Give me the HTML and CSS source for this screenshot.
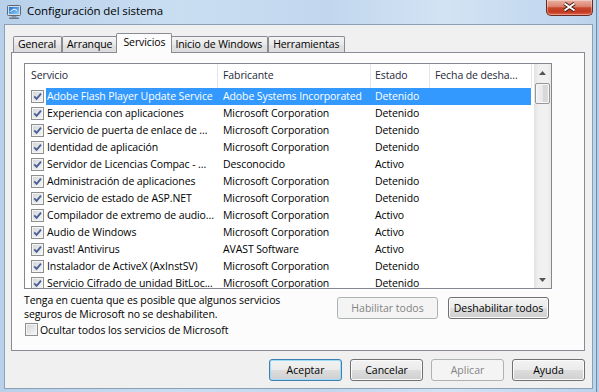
FILE: index.html
```html
<!DOCTYPE html>
<html lang="es">
<head>
    <meta charset="UTF-8">
    <title>Configuración del sistema</title>
    <link rel="stylesheet" href="styles.css">
</head>
<body>
    <svg class="defs" width="0" height="0">
        <symbol id="tick" viewBox="0 0 11 11">
            <path d="M2.2 5.4 4.6 7.9 9 2.6" fill="none" stroke="#4a5f97" stroke-width="1.8"/>
        </symbol>
    </svg>

    <div class="window">
        <div class="titlebar">
            <svg class="app-icon" width="16" height="16" viewBox="0 0 16 16">
                <defs>
                    <linearGradient id="scr" x1="0" y1="0" x2="1" y2="1">
                        <stop offset="0" stop-color="#1f6fd0"/>
                        <stop offset="1" stop-color="#8fd0fa"/>
                    </linearGradient>
                </defs>
                <rect x="1.5" y="1.5" width="13" height="10" rx="1" fill="#d7dde4" stroke="#5b6878"/>
                <rect x="3" y="3" width="10" height="7" fill="url(#scr)"/>
                <path d="M4.5 7.5 8 5l3 1.5" fill="none" stroke="#fff" stroke-width="1"/>
                <path d="M6 12h4l1 1.5H5z" fill="#8a96a3"/>
                <rect x="3" y="13.5" width="10" height="1.5" rx=".7" fill="#6b7886"/>
            </svg>
            <span class="title">Configuración del sistema</span>
            <div class="close">
                <svg width="15" height="10" viewBox="0 0 15 10">
                    <path d="M2.5 1.5 12.5 8.5M12.5 1.5 2.5 8.5" stroke="#3c1810" stroke-width="3.8"/>
                    <path d="M2.5 1.5 12.5 8.5M12.5 1.5 2.5 8.5" stroke="#fff" stroke-width="2"/>
                </svg>
            </div>
        </div>

        <div class="client">
            <div class="tabs">
                <div class="tab">General</div>
                <div class="tab">Arranque</div>
                <div class="tab tab-active">Servicios</div>
                <div class="tab">Inicio de Windows</div>
                <div class="tab">Herramientas</div>
            </div>

            <div class="tabpage">
                <div class="listview">
                    <div class="lv-main">
                        <div class="lv-header">
                            <div class="col col-name">Servicio</div>
                            <div class="col col-maker">Fabricante</div>
                            <div class="col col-state">Estado</div>
                            <div class="col col-date">Fecha de desha...</div>
                        </div>
                        <div class="lv-rows">
                            <div class="row row-selected">
                                <span class="chk"><svg><use href="#tick"/></svg></span>
                                <div class="cells">
                                    <span class="cell cell-name">Adobe Flash Player Update Service</span>
                                    <span class="cell cell-maker">Adobe Systems Incorporated</span>
                                    <span class="cell cell-state">Detenido</span>
                                    <span class="cell cell-date"></span>
                                </div>
                            </div>
                            <div class="row">
                                <span class="chk"><svg><use href="#tick"/></svg></span>
                                <div class="cells">
                                    <span class="cell cell-name">Experiencia con aplicaciones</span>
                                    <span class="cell cell-maker">Microsoft Corporation</span>
                                    <span class="cell cell-state">Detenido</span>
                                    <span class="cell cell-date"></span>
                                </div>
                            </div>
                            <div class="row">
                                <span class="chk"><svg><use href="#tick"/></svg></span>
                                <div class="cells">
                                    <span class="cell cell-name">Servicio de puerta de enlace de ...</span>
                                    <span class="cell cell-maker">Microsoft Corporation</span>
                                    <span class="cell cell-state">Detenido</span>
                                    <span class="cell cell-date"></span>
                                </div>
                            </div>
                            <div class="row">
                                <span class="chk"><svg><use href="#tick"/></svg></span>
                                <div class="cells">
                                    <span class="cell cell-name">Identidad de aplicación</span>
                                    <span class="cell cell-maker">Microsoft Corporation</span>
                                    <span class="cell cell-state">Detenido</span>
                                    <span class="cell cell-date"></span>
                                </div>
                            </div>
                            <div class="row">
                                <span class="chk"><svg><use href="#tick"/></svg></span>
                                <div class="cells">
                                    <span class="cell cell-name">Servidor de Licencias Compac - ...</span>
                                    <span class="cell cell-maker">Desconocido</span>
                                    <span class="cell cell-state">Activo</span>
                                    <span class="cell cell-date"></span>
                                </div>
                            </div>
                            <div class="row">
                                <span class="chk"><svg><use href="#tick"/></svg></span>
                                <div class="cells">
                                    <span class="cell cell-name">Administración de aplicaciones</span>
                                    <span class="cell cell-maker">Microsoft Corporation</span>
                                    <span class="cell cell-state">Detenido</span>
                                    <span class="cell cell-date"></span>
                                </div>
                            </div>
                            <div class="row">
                                <span class="chk"><svg><use href="#tick"/></svg></span>
                                <div class="cells">
                                    <span class="cell cell-name">Servicio de estado de ASP.NET</span>
                                    <span class="cell cell-maker">Microsoft Corporation</span>
                                    <span class="cell cell-state">Detenido</span>
                                    <span class="cell cell-date"></span>
                                </div>
                            </div>
                            <div class="row">
                                <span class="chk"><svg><use href="#tick"/></svg></span>
                                <div class="cells">
                                    <span class="cell cell-name">Compilador de extremo de audio...</span>
                                    <span class="cell cell-maker">Microsoft Corporation</span>
                                    <span class="cell cell-state">Activo</span>
                                    <span class="cell cell-date"></span>
                                </div>
                            </div>
                            <div class="row">
                                <span class="chk"><svg><use href="#tick"/></svg></span>
                                <div class="cells">
                                    <span class="cell cell-name">Audio de Windows</span>
                                    <span class="cell cell-maker">Microsoft Corporation</span>
                                    <span class="cell cell-state">Activo</span>
                                    <span class="cell cell-date"></span>
                                </div>
                            </div>
                            <div class="row">
                                <span class="chk"><svg><use href="#tick"/></svg></span>
                                <div class="cells">
                                    <span class="cell cell-name">avast! Antivirus</span>
                                    <span class="cell cell-maker">AVAST Software</span>
                                    <span class="cell cell-state">Activo</span>
                                    <span class="cell cell-date"></span>
                                </div>
                            </div>
                            <div class="row">
                                <span class="chk"><svg><use href="#tick"/></svg></span>
                                <div class="cells">
                                    <span class="cell cell-name">Instalador de ActiveX (AxInstSV)</span>
                                    <span class="cell cell-maker">Microsoft Corporation</span>
                                    <span class="cell cell-state">Detenido</span>
                                    <span class="cell cell-date"></span>
                                </div>
                            </div>
                            <div class="row">
                                <span class="chk"><svg><use href="#tick"/></svg></span>
                                <div class="cells">
                                    <span class="cell cell-name">Servicio Cifrado de unidad BitLoc...</span>
                                    <span class="cell cell-maker">Microsoft Corporation</span>
                                    <span class="cell cell-state">Detenido</span>
                                    <span class="cell cell-date"></span>
                                </div>
                            </div>
                        </div>
                    </div>
                    <div class="vscroll">
                        <div class="sb-arrow">
                            <svg width="7" height="4" viewBox="0 0 7 4"><path d="M0 4h7L3.5 0z" fill="#555"/></svg>
                        </div>
                        <div class="sb-thumb"></div>
                        <div class="sb-track"></div>
                        <div class="sb-arrow">
                            <svg width="7" height="4" viewBox="0 0 7 4"><path d="M0 0h7L3.5 4z" fill="#555"/></svg>
                        </div>
                    </div>
                </div>

                <div class="below">
                    <div class="note">
                        <p>Tenga en cuenta que es posible que algunos servicios<br>seguros de Microsoft no se deshabiliten.</p>
                        <label class="check-line"><span class="chk"></span>Ocultar todos los servicios de Microsoft</label>
                    </div>
                    <div class="btn-group">
                        <button class="btn btn-wide" disabled>Habilitar todos</button>
                        <button class="btn btn-wide">Deshabilitar todos</button>
                    </div>
                </div>
            </div>

            <div class="footer">
                <button class="btn btn-default">Aceptar</button>
                <button class="btn">Cancelar</button>
                <button class="btn" disabled>Aplicar</button>
                <button class="btn">Ayuda</button>
            </div>
        </div>
    </div>
</body>
</html>
```

FILE: styles.css
```css
:root {
    --face: #f0f0f0;
    --tab-border: #898c95;
    --list-border: #828790;
    --select: #3399ff;
    --disabled: #838383;
}

* {
    margin: 0;
    padding: 0;
    box-sizing: border-box;
}

body {
    width: 599px;
    height: 392px;
    overflow: hidden;
    background: #b4cde8;
    font-family: 'Open Sans', 'Liberation Sans', sans-serif;
    font-size: 10.5px;
    letter-spacing: -0.1px;
    color: #000;
}

.defs {
    position: absolute;
}

/* marco de cristal */
.window {
    width: 597px;
    height: 392px;
    padding: 0 3px 3px 4px;
    display: flex;
    flex-direction: column;
    border-right: 1px solid #6f8db0;
    background: linear-gradient(to right, #b8d0ea 0%, #cadef2 30%, #c2d7ee 55%, #d2e3f4 75%, #bcd3ec 100%);
}

.titlebar {
    height: 24px;
    display: flex;
    align-items: flex-start;
}

.app-icon {
    margin: 4px 0 0 2px;
    flex-shrink: 0;
}

.title {
    margin-left: 5px;
    line-height: 22px;
    font-size: 11.5px;
    letter-spacing: -0.1px;
}

.close {
    margin-left: auto;
    width: 47px;
    height: 16px;
    display: flex;
    align-items: center;
    justify-content: center;
    padding-bottom: 2px;
    border: 1px solid #6b2a1f;
    border-top: none;
    border-radius: 0 0 5px 5px;
    background: linear-gradient(#eab0a2 0%, #dc806c 45%, #c8452c 52%, #c33a20 80%, #de6a4d 100%);
    box-shadow: inset 0 0 0 1px rgba(255, 255, 255, 0.35);
}

/* área de cliente */
.client {
    flex: 1;
    background: var(--face);
    border: 1px solid #8c9fb4;
    padding: 8px 7px 7px 6px;
    display: flex;
    flex-direction: column;
}

.tabs {
    height: 19px;
    padding-left: 2px;
    display: flex;
    align-items: flex-end;
    position: relative;
    z-index: 1;
}

.tab {
    height: 16px;
    line-height: 15px;
    padding: 0 5px 0 4px;
    border: 1px solid var(--tab-border);
    border-bottom: none;
    border-radius: 2px 2px 0 0;
    background: linear-gradient(#f4f4f4, #e9e9e9 50%, #e1e1e1 51%, #dcdcdc);
    white-space: nowrap;
}

.tab-active {
    height: 20px;
    line-height: 17px;
    margin: 0 -2px -1px;
    padding: 0 6px;
    background: #fcfcfc;
    position: relative;
}

.tabpage {
    height: 299px;
    border: 1px solid var(--tab-border);
    background: #fcfcfc;
    padding: 10px 0 0 12px;
}

/* lista de servicios */
.listview {
    width: 528px;
    height: 226px;
    border: 1px solid var(--list-border);
    background: #fff;
    display: flex;
}

.lv-main {
    flex: 1;
    overflow: hidden;
}

.lv-header {
    height: 24px;
    display: flex;
    color: #1e2a3a;
}

.col {
    line-height: 23px;
    border-right: 1px solid #e3e6ea;
    white-space: nowrap;
    overflow: hidden;
}

.col-name { width: 193px; padding-left: 6px; }
.col-maker { width: 153px; padding-left: 5px; }
.col-state { width: 59px; padding-left: 4px; }
.col-date { width: 102px; padding-left: 5px; }

.row {
    height: 17px;
    display: flex;
    align-items: center;
}

.row .chk {
    margin: 0 2px 0 6px;
}

.cells {
    display: flex;
    height: 17px;
    line-height: 17px;
    white-space: nowrap;
}

.row-selected .cells {
    background: var(--select);
    color: #fff;
}

.cell {
    overflow: hidden;
}

.cell-name { width: 172px; padding-left: 1px; }
.cell-maker { width: 153px; padding-left: 5px; }
.cell-state { width: 59px; padding-left: 4px; }
.cell-date { width: 101px; }

.chk {
    width: 13px;
    height: 13px;
    flex-shrink: 0;
    border: 1px solid #8e8f8f;
    background: linear-gradient(135deg, #d2d4d7, #f7f7f7);
    box-shadow: inset 0 0 0 1px #f4f4f4;
    display: inline-block;
}

.chk svg {
    display: block;
    width: 11px;
    height: 11px;
}

.vscroll {
    width: 17px;
    display: flex;
    flex-direction: column;
    align-items: center;
    background: linear-gradient(to right, #e2e2e2, #efefef 25%, #f1f1f1 75%, #e9e9e9);
}

.sb-arrow {
    height: 17px;
    width: 100%;
    display: flex;
    align-items: center;
    justify-content: center;
}

.sb-thumb {
    width: 15px;
    height: 21px;
    margin-top: 2px;
    border: 1px solid #979797;
    border-radius: 2px;
    background: linear-gradient(to right, #f3f3f3, #e8e8e8 50%, #d6d6d6 51%, #dcdcdc);
    box-shadow: inset 0 0 0 1px #f7f7f7;
}

.sb-track {
    flex: 1;
}

/* debajo de la lista */
.below {
    width: 528px;
    padding-right: 3px;
    display: flex;
}

.note {
    flex: 1;
    padding-top: 4px;
    line-height: 14px;
}

.check-line {
    height: 15px;
    margin-top: 1px;
    display: flex;
    align-items: center;
    gap: 2px;
}

.check-line .chk {
    margin-left: 1px;
}

.btn-group {
    display: flex;
    gap: 10px;
    padding-top: 8px;
}

.btn {
    width: 73px;
    height: 22px;
    border: 1px solid #707070;
    border-radius: 3px;
    background: linear-gradient(#f2f2f2, #ebebeb 50%, #dddddd 51%, #cfcfcf);
    box-shadow: inset 0 0 0 1px #fbfbfb;
    font: inherit;
    color: #000;
}

.btn-wide {
    width: 101px;
}

.btn:disabled {
    border-color: #adb2b5;
    background: #f4f4f4;
    box-shadow: none;
    color: var(--disabled);
}

.btn-default {
    border-color: #3c7fb1;
    box-shadow: inset 0 0 0 1px #9fdcf8;
}

.footer {
    margin-top: 8px;
    display: flex;
    justify-content: flex-end;
    gap: 8px;
}
```
